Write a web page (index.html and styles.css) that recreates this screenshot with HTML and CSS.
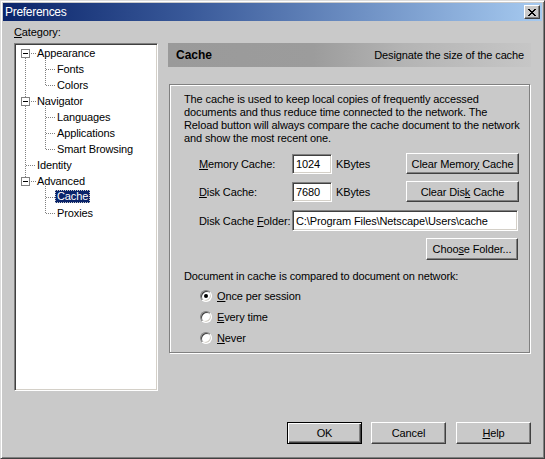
FILE: index.html
```html
<!DOCTYPE html>
<html>
<head>
<meta charset="utf-8">
<title>Preferences</title>
<link rel="stylesheet" href="styles.css">
</head>
<body>
<div class="window">
  <div class="titlebar">
    <span class="title">Preferences</span>
    <span class="close">
      <svg width="8" height="7" viewBox="0 0 8 7" shape-rendering="crispEdges"><path fill="#000" d="M0 0h2v1h-2z M6 0h2v1h-2z M1 1h2v1h-2z M5 1h2v1h-2z M2 2h4v1h-4z M3 3h2v1h-2z M2 4h4v1h-4z M1 5h2v1h-2z M5 5h2v1h-2z M0 6h2v1h-2z M6 6h2v1h-2z"/></svg>
    </span>
  </div>
  <div class="main">
    <div class="left">
      <div class="cat-label"><u>C</u>ategory:</div>
      <div class="tree">
        <svg class="tree-lines" width="140" height="344" viewBox="0 0 140 344" shape-rendering="crispEdges">
          <g stroke="#808080" stroke-width="1" stroke-dasharray="1 1" fill="none">
            <path d="M9.5 9V133"/>
            <path d="M15 8.5H20 M15 56.5H20 M15 136.5H20 M10 120.5H20"/>
            <path d="M29.5 13V41 M30 24.5H39 M30 40.5H39"/>
            <path d="M29.5 61V105 M30 72.5H39 M30 88.5H39 M30 104.5H39"/>
            <path d="M29.5 141V169 M30 152.5H39 M30 168.5H39"/>
          </g>
          <g>
            <rect x="5.5" y="4.5" width="8" height="8" fill="#fff" stroke="#808080"/>
            <path d="M7 8.5H12" stroke="#000"/>
            <rect x="5.5" y="52.5" width="8" height="8" fill="#fff" stroke="#808080"/>
            <path d="M7 56.5H12" stroke="#000"/>
            <rect x="5.5" y="132.5" width="8" height="8" fill="#fff" stroke="#808080"/>
            <path d="M7 136.5H12" stroke="#000"/>
          </g>
        </svg>
        <div class="tree-rows">
          <div class="row l0">Appearance</div>
          <div class="row l1"><span class="item">Fonts</span></div>
          <div class="row l1"><span class="item">Colors</span></div>
          <div class="row l0">Navigator</div>
          <div class="row l1"><span class="item">Languages</span></div>
          <div class="row l1"><span class="item">Applications</span></div>
          <div class="row l1"><span class="item">Smart Browsing</span></div>
          <div class="row l0">Identity</div>
          <div class="row l0">Advanced</div>
          <div class="row l1"><span class="item selected">Cache</span></div>
          <div class="row l1"><span class="item">Proxies</span></div>
        </div>
      </div>
    </div>
    <div class="right">
      <div class="header">
        <b class="header-title">Cache</b>
        <span class="header-desc">Designate the size of the cache</span>
      </div>
      <div class="group">
        <p class="desc">The cache is used to keep local copies of frequently accessed<br>documents and thus reduce time connected to the network. The<br>Reload button will always compare the cache document to the network<br>and show the most recent one.</p>
        <div class="frow first">
          <span class="flabel"><u>M</u>emory Cache:</span>
          <span class="field num">1024</span>
          <span class="unit">KBytes</span>
          <span class="btn wide"><span>Clear Memor<u>y</u> Cache</span></span>
        </div>
        <div class="frow second">
          <span class="flabel"><u>D</u>isk Cache:</span>
          <span class="field num">7680</span>
          <span class="unit">KBytes</span>
          <span class="btn wide"><span>Clear Dis<u>k</u> Cache</span></span>
        </div>
        <div class="frow third">
          <span class="flabel">Disk Cache <u>F</u>older:</span>
          <span class="field path">C:\Program Files\Netscape\Users\cache</span>
        </div>
        <div class="frow choose">
          <span class="btn choose-btn"><span>Choo<u>s</u>e Folder...</span></span>
        </div>
        <p class="doc">Document in cache is compared to document on network:</p>
        <div class="radios">
          <div class="rrow"><span class="radio checked"></span><span><u>O</u>nce per session</span></div>
          <div class="rrow"><span class="radio"></span><span><u>E</u>very time</span></div>
          <div class="rrow"><span class="radio"></span><span><u>N</u>ever</span></div>
        </div>
      </div>
    </div>
  </div>
  <div class="footer">
    <span class="btn dlg default">OK</span>
    <span class="btn dlg cancel">Cancel</span>
    <span class="btn dlg help"><span><u>H</u>elp</span></span>
  </div>
</div>
</body>
</html>
```
FILE: styles.css
```css
* { box-sizing: border-box; }

body {
  margin: 0;
  background: #c9c9c9;
  font-family: "Liberation Sans", Arial, sans-serif;
  font-size: 11px;
  letter-spacing: -0.12px;
  color: #000;
}

.window {
  width: 545px;
  height: 459px;
  background: #c9c9c9;
  border: 1px solid;
  border-color: #dcdcdc #404040 #404040 #dcdcdc;
  box-shadow: inset 1px 1px #fff, inset -1px -1px #808080;
  padding: 2px;
  display: flex;
  flex-direction: column;
}

.titlebar {
  height: 18px;
  flex: none;
  background: linear-gradient(to right, #0a246a 0%, #3a5a9a 35%, #a6caf0 100%);
  display: flex;
  align-items: center;
  justify-content: space-between;
  padding: 0 2px;
  color: #fff;
}

.title { font-size: 12px; letter-spacing: -0.3px; }

.close {
  width: 16px;
  height: 14px;
  background: #c9c9c9;
  border: 1px solid;
  border-color: #fff #404040 #404040 #fff;
  box-shadow: inset -1px -1px #808080;
  display: flex;
  align-items: center;
  justify-content: center;
}

.main {
  display: flex;
  padding: 5px 0 0 11px;
  flex: none;
}

.left { width: 144px; margin-right: 10px; flex: none; }

.cat-label { height: 13px; line-height: 13px; margin-bottom: 4px; }

.tree {
  width: 144px;
  height: 348px;
  background: #fff;
  border: 1px solid;
  border-color: #808080 #fff #fff #808080;
  box-shadow: inset 1px 1px #404040, inset -1px -1px #d4d0c8;
  position: relative;
  padding: 1px;
}

.tree-lines { position: absolute; top: 1px; left: 1px; }

.tree-rows { position: relative; }

.row { height: 16px; line-height: 16px; white-space: nowrap; }
.l0 { padding-left: 21px; }
.l1 { padding-left: 39px; }
.item { padding: 0 2px; }
.item.selected {
  display: inline-block;
  vertical-align: top;
  margin-top: 1px;
  height: 13px;
  line-height: 13px;
  background: #0a246a;
  color: #fff;
  outline: 1px dotted #c8c8c8;
  outline-offset: -1px;
}

.right { width: 363px; padding-top: 17px; flex: none; }

.header {
  height: 24px;
  display: flex;
  align-items: center;
  justify-content: space-between;
  padding: 0 7px 0 8px;
  background: linear-gradient(to right, #9a9a9a 0%, #9c9c9c 40%, #b4b4b4 65%, #c6c6c6 100%);
}

.header-title { font-size: 12px; font-weight: bold; letter-spacing: 0; }

.group {
  margin: 17px 0 0 1px;
  width: 361px;
  height: 269px;
  border: 1px solid #808080;
  box-shadow: inset 1px 1px #fff, 1px 1px #fff;
  padding: 8px 11px 0 0;
}

.desc { margin: 0 0 8px 14px; line-height: 13px; white-space: nowrap; }

.frow { display: flex; align-items: center; height: 21px; padding-left: 29px; }
.frow.second { margin-top: 7px; }
.frow.third { margin-top: 8px; }
.frow.choose { margin-top: 7px; height: 22px; justify-content: flex-end; }

.flabel { width: 93px; flex: none; white-space: nowrap; }

.field {
  height: 20px;
  background: #fff;
  border: 1px solid;
  border-color: #808080 #fff #fff #808080;
  box-shadow: inset 1px 1px #404040, inset -1px -1px #d4d0c8;
  display: flex;
  align-items: center;
  padding-left: 3px;
  white-space: nowrap;
  flex: none;
}
.num { width: 40px; }
.path { width: 226px; height: 21px; }

.unit { width: 74px; padding-left: 4px; flex: none; }

.btn {
  height: 21px;
  display: flex;
  align-items: center;
  justify-content: center;
  background: #c9c9c9;
  border: 1px solid;
  border-color: #fff #404040 #404040 #fff;
  box-shadow: inset -1px -1px #808080;
  white-space: nowrap;
  flex: none;
}
.wide { width: 113px; }
.choose-btn { width: 92px; height: 22px; }

.doc { margin: 10px 0 0 14px; line-height: 13px; white-space: nowrap; }

.radios { margin-top: 2px; padding-left: 30px; }
.rrow { height: 21px; display: flex; align-items: center; }

.radio {
  width: 12px;
  height: 12px;
  border-radius: 50%;
  background: #fff;
  border: 1px solid;
  border-color: #808080 #fff #fff #808080;
  box-shadow: inset 1px 1px #404040, inset -1px -1px #d4d0c8;
  margin-right: 5px;
  display: flex;
  align-items: center;
  justify-content: center;
  flex: none;
}
.radio.checked::after {
  content: "";
  width: 4px;
  height: 4px;
  border-radius: 50%;
  background: #000;
}

.footer {
  display: flex;
  justify-content: flex-end;
  margin-top: 31px;
  padding-right: 11px;
}

.dlg { width: 75px; height: 22px; }
.cancel { margin-left: 9px; }
.help { margin-left: 10px; }

.btn.default {
  border: 1px solid #000;
  box-shadow: inset 1px 1px #fff, inset -1px -1px #404040, inset -2px -2px #808080;
}
```
